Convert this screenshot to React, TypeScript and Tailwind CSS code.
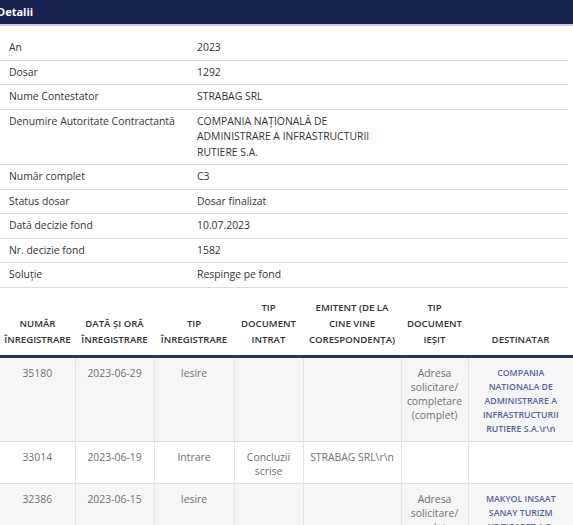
import React from 'react';

const details: { label: string; value: React.ReactNode }[] = [
  { label: 'An', value: '2023' },
  { label: 'Dosar', value: '1292' },
  { label: 'Nume Contestator', value: 'STRABAG SRL' },
  {
    label: 'Denumire Autoritate Contractantă',
    value: (
      <>
        COMPANIA NAȚIONALĂ DE
        <br />
        ADMINISTRARE A INFRASTRUCTURII
        <br />
        RUTIERE S.A.
      </>
    ),
  },
  { label: 'Număr complet', value: 'C3' },
  { label: 'Status dosar', value: 'Dosar finalizat' },
  { label: 'Dată decizie fond', value: '10.07.2023' },
  { label: 'Nr. decizie fond', value: '1582' },
  { label: 'Soluție', value: 'Respinge pe fond' },
];

const headers = [
  ['NUMĂR', 'ÎNREGISTRARE'],
  ['DATĂ ȘI ORĂ', 'ÎNREGISTRARE'],
  ['TIP', 'ÎNREGISTRARE'],
  ['TIP', 'DOCUMENT', 'INTRAT'],
  ['EMITENT (DE LA', 'CINE VINE', 'CORESPONDENȚA)'],
  ['TIP', 'DOCUMENT', 'IEȘIT'],
  ['DESTINATAR'],
];

const widths = ['w-[75px]', 'w-[79px]', 'w-[80px]', 'w-[69px]', 'w-[98px]', 'w-[67px]', 'w-[105px]'];

type Row = {
  nr: string;
  data: string;
  tip: string;
  intrat: string[];
  emitent: string;
  iesit: string[];
  dest: string[];
};

const rows: Row[] = [
  {
    nr: '35180',
    data: '2023-06-29',
    tip: 'Iesire',
    intrat: [],
    emitent: '',
    iesit: ['Adresa', 'solicitare/', 'completare', '(complet)'],
    dest: ['COMPANIA', 'NATIONALA DE', 'ADMINISTRARE A', 'INFRASTRUCTURII', 'RUTIERE S.A.\\r\\n'],
  },
  {
    nr: '33014',
    data: '2023-06-19',
    tip: 'Intrare',
    intrat: ['Concluzii', 'scrise'],
    emitent: 'STRABAG SRL\\r\\n',
    iesit: [],
    dest: [],
  },
  {
    nr: '32386',
    data: '2023-06-15',
    tip: 'Iesire',
    intrat: [],
    emitent: '',
    iesit: ['Adresa', 'solicitare/', 'completare', '(complet)'],
    dest: ['MAKYOL INSAAT', 'SANAY TURIZM', 'VE TICARET A.S.', 'SI ASOCIATII\\r\\n'],
  },
];

function Lines({ lines }: { lines: string[] }) {
  return (
    <>
      {lines.map((l, i) => (
        <div key={i}>{l}</div>
      ))}
    </>
  );
}

const cell = 'px-[3px] pt-[8px] pb-[5px] align-top text-center leading-[14px] border-r border-[#e4e4e4]';

export default function App() {
  return (
    <div className="w-[573px] h-[525px] overflow-hidden bg-white font-['Open_Sans',sans-serif]">
      {/* Title bar */}
      <div className="h-[26px] bg-[#172250] border-b-2 border-[#c9cce4] flex items-center">
        <span className="ml-[-3px] text-[11px] font-bold text-white">Detalii</span>
      </div>

      {/* Details */}
      <table className="mt-[10px] w-[568px] border-collapse text-[10.4px] text-[#333]">
        <tbody>
          {details.map((d, i) => (
            <tr key={d.label} className={i === 0 ? '' : 'border-t border-[#dcdcdc]'}>
              <td className="w-[197px] pl-[9px] py-[4px] leading-[15.5px] align-top">{d.label}</td>
              <td className="py-[4px] leading-[15.5px] align-top">{d.value}</td>
            </tr>
          ))}
          <tr className="border-t border-[#dcdcdc]">
            <td colSpan={2} className="h-0 p-0" />
          </tr>
        </tbody>
      </table>

      {/* Correspondence */}
      <table className="mt-[6px] w-[573px] table-fixed border-collapse text-[10.4px]">
        <colgroup>
          {widths.map((w, i) => (
            <col key={i} className={w} />
          ))}
        </colgroup>
        <thead>
          <tr className="border-b-[3px] border-[#27345a]">
            {headers.map((h, i) => (
              <th key={i} className="px-[2px] pt-[6px] pb-[7px] align-bottom text-center text-[9.6px] font-semibold leading-[16px] text-[#333]">
                <Lines lines={h} />
              </th>
            ))}
          </tr>
        </thead>
        <tbody className="text-[#707070]">
          {rows.map((r, i) => (
            <tr key={r.nr} className={`border-b border-[#dddddd] ${i % 2 === 0 ? 'bg-[#f6f6f6]' : 'bg-white'}`}>
              <td className={cell}>{r.nr}</td>
              <td className={cell}>{r.data}</td>
              <td className={cell}>{r.tip}</td>
              <td className={cell}>
                <Lines lines={r.intrat} />
              </td>
              <td className={cell}>{r.emitent}</td>
              <td className={cell}>
                <Lines lines={r.iesit} />
              </td>
              <td className="px-[3px] pt-[8px] pb-[5px] align-top text-center leading-[14px] text-[8.8px] font-semibold text-[#56639a]">
                <Lines lines={r.dest} />
              </td>
            </tr>
          ))}
        </tbody>
      </table>
    </div>
  );
}
